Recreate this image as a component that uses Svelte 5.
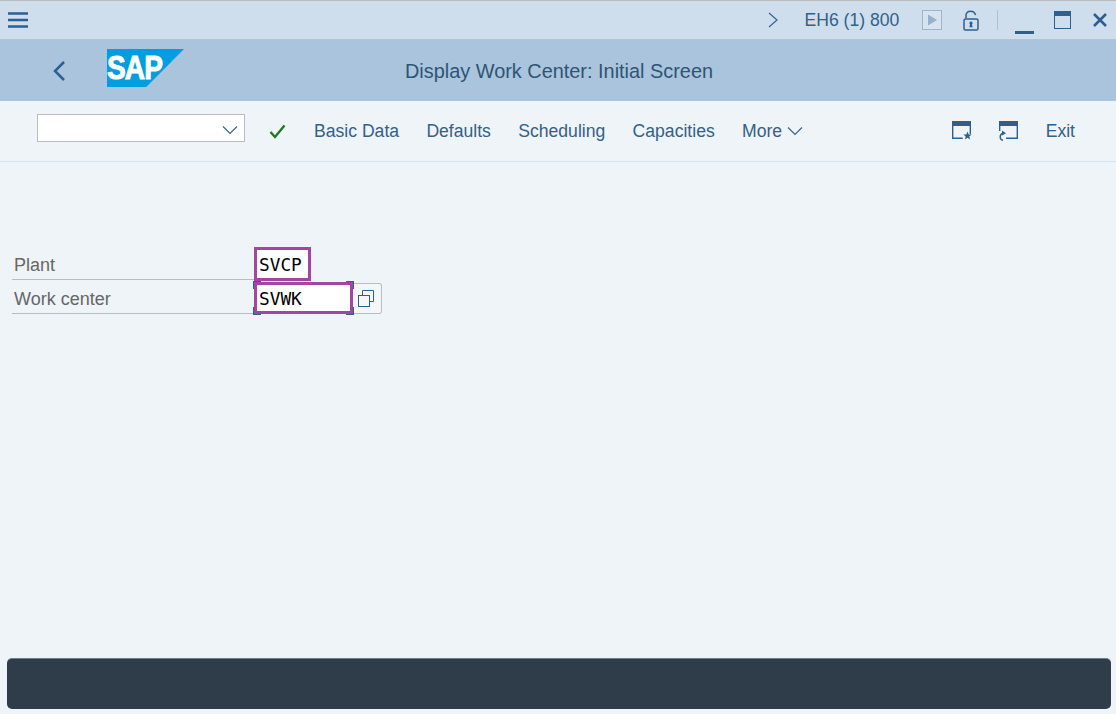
<script>
  const actions = ['Basic Data', 'Defaults', 'Scheduling', 'Capacities']
</script>

<div class="window">
  <header class="topbar">
    <svg class="menu" width="22" height="16" viewBox="0 0 22 16"><path d="M1 1.500h20M1 8h20M1 14.500h20" /></svg>
    <div class="sys">
      <svg class="sys-arrow" width="12" height="16" viewBox="0 0 12 16"><path d="M2 1l8 7-8 7" /></svg>
      <span class="sys-name">EH6 (1) 800</span>
      <svg class="play" width="20" height="20" viewBox="0 0 20 20">
        <rect x="0.5" y="0.5" width="19" height="19" />
        <path d="M6 4.5l9 5.5-9 5.5z" />
      </svg>
      <svg class="lock" width="16" height="21" viewBox="0 0 16 21">
        <path d="M3 8V5.500C3 3 5 1.200 7.500 1.200S12 3 12.600 5" />
        <rect x="1" y="9" width="14" height="11" rx="1.500" />
        <path class="solid" d="M8 11.500a1.700 1.700 0 0 1 1 3l.6 2.800H6.400l.6-2.800a1.700 1.700 0 0 1 1-3z" />
      </svg>
      <span class="divider"></span>
      <span class="minimize"></span>
      <span class="maximize"></span>
      <svg class="close" width="16" height="16" viewBox="0 0 16 16"><path d="M2 2l12 12M14 2L2 14" /></svg>
    </div>
  </header>

  <div class="titlebar">
    <svg class="back" width="14" height="22" viewBox="0 0 14 22"><path d="M12 2L3 11l9 9" /></svg>
    <div class="logo"><span>SAP</span></div>
    <h1>Display Work Center: Initial Screen</h1>
  </div>

  <nav class="toolbar">
    <div class="cmd">
      <svg width="16" height="10" viewBox="0 0 16 10"><path d="M1 1.500l7 7 7-7" /></svg>
    </div>
    <svg class="check" width="17" height="15" viewBox="0 0 17 15"><path d="M1.500 8l4.500 5L15.500 1.500" /></svg>
    {#each actions as a}
      <span class="action">{a}</span>
    {/each}
    <span class="action more">More
      <svg width="16" height="10" viewBox="0 0 16 10"><path d="M1 1.500l7 7 7-7" /></svg>
    </span>
    <div class="right">
      <svg class="win" width="20" height="20" viewBox="0 0 20 20">
        <path class="fill" d="M0 0h19v5H0z" />
        <path d="M.7 4v13.300h10M18.300 4v9" />
        <path class="fill" d="M15.500 10.500l1.200 3h3l-2.400 1.900.9 3.100-2.700-1.800-2.700 1.800.9-3.100-2.400-1.900h3z" />
      </svg>
      <svg class="win" width="20" height="20" viewBox="0 0 20 20">
        <path class="fill" d="M1 0h19v5H1z" />
        <path d="M1.700 4v6M19.300 4v13.300H8" />
        <path d="M5.500 12.200A3.600 3.600 0 0 0 5 19.300" />
        <path class="fill" d="M4 9.500l4 2.700-4 2.300z" />
      </svg>
      <span class="action exit">Exit</span>
    </div>
  </nav>

  <main class="form">
    <div class="row">
      <label for="plant">Plant</label>
      <div class="field plant"><input id="plant" value="SVCP" /></div>
    </div>
    <div class="row">
      <label for="wc">Work center</label>
      <div class="field wc">
        <input id="wc" value="SVWK" />
        <i class="tl"></i><i class="tr"></i><i class="bl"></i><i class="br"></i>
      </div>
      <button class="help" aria-label="Value help">
        <svg width="16" height="17" viewBox="0 0 16 17">
          <rect x="0.500" y="5.500" width="11" height="11" />
          <path d="M4.500 5.500v-5h11v11h-4" />
        </svg>
      </button>
    </div>
  </main>

  <footer class="status"></footer>
</div>

<style>
  :global(body) {
    margin: 0;
    background: #eff4f9;
  }

  .window {
    width: 1116px;
    height: 714px;
    display: flex;
    flex-direction: column;
    font-family: "Liberation Sans", Arial, sans-serif;
    font-size: 17.6px;
    color: #346187;
    overflow: hidden;
    box-sizing: border-box;
  }

  .topbar {
    height: 40px;
    flex: none;
    box-sizing: border-box;
    display: flex;
    align-items: center;
    justify-content: space-between;
    padding: 0 8px 0 7px;
    background: #cfdeec;
    border-top: 1px solid #b8bcc0;
    border-bottom: 1px solid #b4c3d1;
  }

  .menu path {
    fill: none;
    stroke: #2f5f8e;
    stroke-width: 2.600;
  }

  .sys {
    display: flex;
    align-items: center;
  }

  .sys-arrow path {
    fill: none;
    stroke: #3a6a94;
    stroke-width: 1.300;
  }

  .sys-name {
    margin-left: 26px;
    width: 117px;
    white-space: nowrap;
  }

  .play rect {
    fill: #d7e3ee;
    stroke: #9db6cc;
  }

  .play path {
    fill: #94b2cd;
  }

  .lock {
    margin-left: 21px;
  }

  .lock path,
  .lock rect {
    fill: none;
    stroke: #2f5f8e;
    stroke-width: 1.500;
  }

  .lock .solid {
    fill: #2f5f8e;
    stroke: none;
  }

  .divider {
    width: 1px;
    height: 20px;
    background: #b0bfcd;
    margin-left: 18px;
  }

  .minimize {
    width: 19px;
    height: 3px;
    background: #2f5f8e;
    margin: 14px 0 0 17px;
    align-self: center;
    transform: translateY(5px);
  }

  .maximize {
    width: 15.500px;
    height: 11.500px;
    border: 1.500px solid #2f5f8e;
    border-top-width: 5px;
    margin: 0 0 0 20px;
  }

  .close {
    margin: 0 0 0 21px;
  }

  .close path {
    fill: none;
    stroke: #2f5f8e;
    stroke-width: 2.600;
  }

  .titlebar {
    height: 61px;
    flex: none;
    position: relative;
    display: flex;
    align-items: center;
    background: #a9c4dc;
    padding-left: 52px;
  }

  .back path {
    fill: none;
    stroke: #2f5f8e;
    stroke-width: 2.500;
  }

  .logo {
    width: 77px;
    height: 38px;
    margin: 0 0 5px 41px;
    background: #009de0;
    clip-path: polygon(0 0, 100% 0, 51% 100%, 0 100%);
    color: #fff;
    overflow: hidden;
  }

  .logo span {
    display: inline-block;
    font-weight: 700;
    font-size: 33px;
    line-height: 38px;
    letter-spacing: -1px;
    transform: scaleX(0.85);
    transform-origin: 0 0;
    -webkit-text-stroke: 1px #fff;
  }

  h1 {
    position: absolute;
    left: 2px;
    right: 0;
    top: 21px;
    margin: 0;
    font-weight: 400;
    font-size: 19.900px;
    line-height: 21px;
    text-align: center;
    color: #2f5474;
  }

  .toolbar {
    height: 61px;
    flex: none;
    box-sizing: border-box;
    display: flex;
    align-items: center;
    padding: 0 41px 0 37px;
    background: #eff4f9;
    border-bottom: 1px solid #d8e2ec;
  }

  .cmd {
    width: 208px;
    height: 28px;
    margin-bottom: 6px;
    box-sizing: border-box;
    background: #fff;
    border: 1px solid #b9bdc1;
    display: flex;
    align-items: center;
    justify-content: flex-end;
    padding: 3px 6px 0 0;
  }

  .cmd path,
  .more path {
    fill: none;
    stroke: #346187;
    stroke-width: 1.100;
  }

  .check {
    margin: 0 28px 0 24px;
  }

  .check path {
    fill: none;
    stroke: #1f7a1f;
    stroke-width: 2.400;
  }

  .action {
    margin-right: 27.300px;
    white-space: nowrap;
  }

  .more {
    margin-right: 0;
    display: flex;
    align-items: center;
    gap: 5px;
  }

  .right {
    margin-left: auto;
    display: flex;
    align-items: center;
  }

  .win {
    margin-right: 26px;
  }

  .win path {
    fill: none;
    stroke: #2f5f8e;
    stroke-width: 1.400;
  }

  .win .fill {
    fill: #2f5f8e;
    stroke: none;
  }

  .exit {
    margin: 0 0 0 2px;
  }

  .form {
    flex: 1;
    padding: 84px 0 0 12px;
  }

  .row {
    display: flex;
    height: 34px;
    align-items: flex-start;
  }

  .row label {
    width: 242px;
    height: 34px;
    box-sizing: border-box;
    padding: 9px 0 0 2px;
    font-size: 18px;
    color: #666;
    border-bottom: 1px solid #b9bdc1;
  }

  .field {
    position: relative;
    box-sizing: border-box;
    border: 3px solid #a346a3;
    background: #fff;
  }

  .plant {
    width: 57px;
    height: 34px;
    margin-top: 1px;
  }

  .wc {
    width: 99px;
    height: 32px;
    margin-top: 2px;
  }

  input {
    width: 100%;
    height: 100%;
    box-sizing: border-box;
    border: none;
    outline: none;
    background: none;
    padding: 1px 0 0 2px;
    font-family: "DejaVu Sans Mono", monospace;
    font-size: 17.800px;
    color: #000;
  }

  .field i {
    position: absolute;
    width: 7px;
    height: 7px;
    border: 0 solid #2f5f8e;
  }

  .tl { left: -4px; top: -4px; border-width: 1px 0 0 1px !important; }
  .tr { right: -4px; top: -4px; border-width: 1px 1px 0 0 !important; }
  .bl { left: -4px; bottom: -4px; border-width: 0 0 1px 1px !important; }
  .br { right: -4px; bottom: -4px; border-width: 0 1px 1px 0 !important; }

  .help {
    width: 29px;
    height: 31px;
    margin-top: 3px;
    padding: 0 3px 0 0;
    box-sizing: border-box;
    display: flex;
    align-items: center;
    justify-content: center;
    background: #f5f6f7;
    border: 1px solid #b9bdc1;
    border-left: none;
    border-radius: 0 3px 3px 0;
  }

  .help svg {
    fill: none;
    stroke: #2f5f8e;
  }

  .status {
    height: 51px;
    flex: none;
    margin: 0 5px 5px 7px;
    box-sizing: border-box;
    background: #2f3c49;
    border-top: 1px solid #6f7d8a;
    border-radius: 5px;
  }
</style>
